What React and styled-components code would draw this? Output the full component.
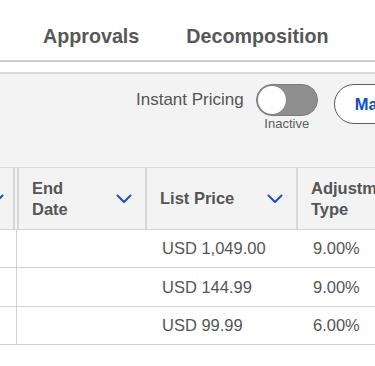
import React from 'react';
import styled, { createGlobalStyle } from 'styled-components';

const GlobalStyle = createGlobalStyle`
  html, body {
    margin: 0;
    padding: 0;
    background: #ffffff;
  }
  * {
    box-sizing: border-box;
  }
`;

const Page = styled.div`
  width: 375px;
  height: 366px;
  overflow: hidden;
  background: #ffffff;
  font-family: "Liberation Sans", Arial, sans-serif;
  color: #555555;
`;

const TabBar = styled.div`
  height: 62px;
  display: flex;
  align-items: center;
  gap: 47px;
  padding: 12px 0 0 43px;
  border-bottom: 2px solid #cdcdcd;
  white-space: nowrap;
`;

const Tab = styled.div`
  font-size: 19.7px;
  font-weight: 700;
  color: #575757;
`;

const Toolbar = styled.div`
  margin-top: 10px;
  height: 95px;
  background: #f3f3f3;
  border-top: 2px solid #d9d9d9;
  display: flex;
  align-items: flex-start;
  padding: 10px 0 0 136px;
  white-space: nowrap;
`;

const Label = styled.div`
  font-size: 17px;
  line-height: 32px;
  color: #555555;
  margin-right: 12px;
`;

const ToggleGroup = styled.div`
  display: flex;
  flex-direction: column;
  align-items: center;
`;

const Track = styled.div`
  width: 62px;
  height: 32px;
  border-radius: 16px;
  background: ${p => (p.on ? '#0b57d0' : '#8e8e8e')};
  border: 1px solid #7c7c7c;
  display: flex;
  align-items: center;
  justify-content: ${p => (p.on ? 'flex-end' : 'flex-start')};
  padding: 1px;
`;

const Knob = styled.div`
  width: 28px;
  height: 28px;
  border-radius: 50%;
  background: #ffffff;
  box-shadow: 0 0 1px rgba(0, 0, 0, 0.3);
`;

const ToggleState = styled.div`
  font-size: 13px;
  color: #5c5c5c;
  line-height: 15px;
`;

const PillButton = styled.button`
  margin-left: 16px;
  height: 40px;
  border-radius: 20px;
  border: 1.5px solid #5a5a5a;
  background: #ffffff;
  padding: 0 20px;
  font-family: inherit;
  font-size: 16.5px;
  font-weight: 700;
  color: #0b4fc6;
  flex-shrink: 0;
`;

const TableWrap = styled.div`
  overflow: hidden;
  border-top: 1px solid #dcdcdc;
`;

const Grid = styled.div`
  margin-left: -120px;
  width: 700px;
`;

const HeaderRow = styled.div`
  display: grid;
  grid-template-columns: 135px 2px 128px 151px 200px;
  height: 62px;
  background: #f3f3f3;
  border-bottom: 1.5px solid #d4d4d4;
`;

const HeadCell = styled.div`
  display: flex;
  align-items: center;
  justify-content: space-between;
  padding: 0 ${p => p.padRight || 13}px 0 13px;
  border-left: ${p => (p.noLeft ? 'none' : '2px solid #d8d8d8')};
  border-right: ${p => (p.right ? '2px solid #d8d8d8' : 'none')};
  font-size: 16.5px;
  font-weight: 700;
  line-height: 21px;
  color: #555555;
`;

const HeadText = styled.div`
  width: ${p => p.w || 'auto'};
`;

const Gap = styled.div``;

const BodyRow = styled.div`
  display: grid;
  grid-template-columns: 137px 130px 151px 200px;
  height: 38.4px;
  border-bottom: 1.5px solid #d0d0d0;
`;

const Cell = styled.div`
  display: flex;
  align-items: center;
  padding-left: 15px;
  font-size: 16.5px;
  color: #555555;
  border-right: ${p => (p.right ? '1.5px solid #d2d2d2' : 'none')};
  white-space: nowrap;
`;

const Chevron = () => (
  <svg width="16" height="10" viewBox="0 0 16 10" fill="none">
    <path d="M1.5 1.5 L8 8 L14.5 1.5" stroke="#1b4fc1" strokeWidth="2" strokeLinecap="round" strokeLinejoin="round" />
  </svg>
);

const rows = [
  { price: 'USD 1,049.00', adj: '9.00%' },
  { price: 'USD 144.99', adj: '9.00%' },
  { price: 'USD 99.99', adj: '6.00%' }
];

const App = () => {
  return (
    <Page>
      <GlobalStyle />
      <TabBar>
        <Tab>Approvals</Tab>
        <Tab>Decomposition</Tab>
      </TabBar>

      <Toolbar>
        <Label>Instant Pricing</Label>
        <ToggleGroup>
          <Track>
            <Knob />
          </Track>
          <ToggleState>Inactive</ToggleState>
        </ToggleGroup>
        <PillButton>Manual Pricing</PillButton>
      </Toolbar>

      <TableWrap>
        <Grid>
          <HeaderRow>
            <HeadCell noLeft right padRight={9}>
              <HeadText>Start Date</HeadText>
              <Chevron />
            </HeadCell>
            <Gap />
            <HeadCell>
              <HeadText w="50px">End Date</HeadText>
              <Chevron />
            </HeadCell>
            <HeadCell>
              <HeadText>List Price</HeadText>
              <Chevron />
            </HeadCell>
            <HeadCell>
              <HeadText w="110px">Adjustment Type</HeadText>
              <Chevron />
            </HeadCell>
          </HeaderRow>

          {rows.map((row, i) => (
            <BodyRow key={i}>
              <Cell right />
              <Cell />
              <Cell>{row.price}</Cell>
              <Cell>{row.adj}</Cell>
            </BodyRow>
          ))}
        </Grid>
      </TableWrap>
    </Page>
  );
};

export default App;
